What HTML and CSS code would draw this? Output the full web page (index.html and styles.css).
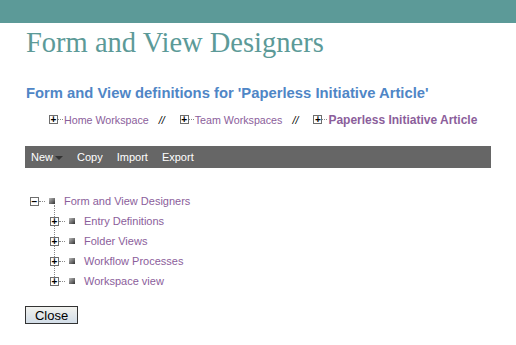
FILE: index.html
```html
<!DOCTYPE html>
<html>
  <head>
    <meta charset="UTF-8" />
    <title>Form and View Designers</title>
    <link rel="stylesheet" href="styles.css">
  </head>
  <body>
    <div class="topbar"></div>

    <div class="page">
      <h1 class="title">Form and View Designers</h1>

      <h2 class="subtitle">Form and View definitions for 'Paperless Initiative Article'</h2>

      <!-- breadcrumbs -->
      <div class="crumbs">
        <span class="crumb"><span class="box">+</span><span class="dots"></span><a href="#">Home Workspace</a></span>
        <span class="sep">//</span>
        <span class="crumb"><span class="box">+</span><span class="dots"></span><a href="#">Team Workspaces</a></span>
        <span class="sep">//</span>
        <span class="crumb"><span class="box">+</span><span class="dots"></span><a href="#" class="current">Paperless Initiative Article</a></span>
      </div>

      <!-- toolbar -->
      <div class="toolbar">
        <span class="tool">New<span class="caret"></span></span>
        <span class="tool">Copy</span>
        <span class="tool">Import</span>
        <span class="tool">Export</span>
      </div>

      <!-- tree -->
      <div class="tree">
        <div class="node root">
          <span class="box">&minus;</span><span class="dots"></span><span class="bullet"></span><a href="#">Form and View Designers</a>
        </div>
        <div class="children">
          <div class="node"><span class="box">+</span><span class="dots"></span><span class="bullet"></span><a href="#">Entry Definitions</a></div>
          <div class="node"><span class="box">+</span><span class="dots"></span><span class="bullet"></span><a href="#">Folder Views</a></div>
          <div class="node"><span class="box">+</span><span class="dots"></span><span class="bullet"></span><a href="#">Workflow Processes</a></div>
          <div class="node last"><span class="box">+</span><span class="dots"></span><span class="bullet"></span><a href="#">Workspace view</a></div>
        </div>
      </div>

      <button class="close">Close</button>
    </div>
  </body>
</html>
```

FILE: styles.css
```css
body {
  margin: 0;
  padding: 0;
  background: #ffffff;
  font-family: "Liberation Sans", Arial, sans-serif;
  font-size: 11px;
}

a {
  color: #8b5e9b;
  text-decoration: none;
}

.topbar {
  height: 23px;
  background: #5c9a98;
}

.page {
  padding: 0 25px;
}

.title {
  margin: 0;
  padding: 2px 0 0 1px;
  height: 40px;
  font-family: "Liberation Serif", "Times New Roman", serif;
  font-weight: normal;
  font-size: 28.5px;
  line-height: 36px;
  color: #5c9a98;
}

.subtitle {
  margin: 0;
  padding: 19px 0 0 1px;
  font-size: 14.8px;
  line-height: 18px;
  color: #4f86c6;
}

.crumbs {
  display: flex;
  align-items: center;
  padding: 9px 0 0 24px;
  height: 17px;
  font-size: 10.7px;
}

.crumb {
  display: flex;
  align-items: center;
}

.crumb .current {
  font-weight: bold;
  font-size: 12px;
}

.sep {
  color: #000;
  font-style: italic;
  padding: 0 15px 0 10px;
}

.box {
  width: 7px;
  height: 7px;
  border: 1px solid #6e6e6e;
  font-size: 10px;
  line-height: 7px;
  text-align: center;
  font-weight: bold;
  color: #000;
  display: inline-flex;
  justify-content: center;
  align-items: center;
  background: #fff;
}

.dots {
  width: 5px;
  height: 0;
  border-top: 1px dotted #888;
  margin-right: 1px;
}

.toolbar {
  margin-top: 18px;
  height: 22px;
  background: #666666;
  width: 466px;
  display: flex;
  align-items: center;
  padding-left: 6px;
  box-sizing: border-box;
  gap: 14px;
}

.tool {
  color: #fff;
  font-size: 11px;
  display: flex;
  align-items: center;
}

.caret {
  width: 0;
  height: 0;
  border-left: 4px solid transparent;
  border-right: 4px solid transparent;
  border-top: 4px solid #333;
  margin-left: 2px;
  margin-top: 2px;
}

.tree {
  padding: 23px 0 0 5px;
}

.node {
  height: 20px;
  display: flex;
  align-items: center;
}

.node .dots {
  width: 6px;
  margin-right: 4px;
}

.bullet {
  width: 6px;
  height: 6px;
  background: linear-gradient(135deg, #bbb, #333);
  margin-right: 9px;
}

.children {
  margin-left: 20px;
  position: relative;
}

.children::before {
  content: "";
  position: absolute;
  left: 4px;
  top: -6px;
  height: 76px;
  border-left: 1px dotted #888;
}

.children .box {
  position: relative;
}

.close {
  margin-top: 15px;
  width: 53px;
  height: 18px;
  padding: 0;
  border: 1px solid #333;
  background: linear-gradient(#f2f2ee, #d2dde8);
  font-family: "Liberation Sans", Arial, sans-serif;
  font-size: 13px;
  color: #000;
}
```
